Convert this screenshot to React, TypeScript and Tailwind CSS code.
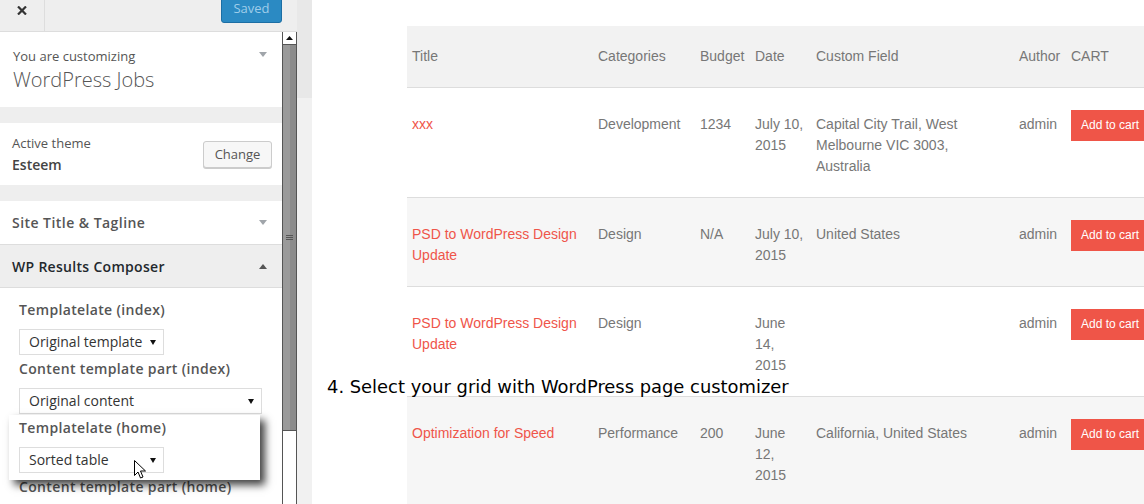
import React from "react";

function Tri({ up = false, className = "" }: { up?: boolean; className?: string }) {
  return (
    <svg width="8" height="5" viewBox="0 0 8 5" className={className}>
      <polygon points={up ? "0,5 8,5 4,0" : "0,0 8,0 4,5"} fill="currentColor" />
    </svg>
  );
}

function SelectBox({ label, width }: { label: string; width: string }) {
  return (
    <div className={`h-[26px] ${width} border border-[#ddd] bg-white flex items-center justify-between pl-[9px] pr-[7px]`}>
      <span className="text-[14px] leading-[20px] text-[#333]">{label}</span>
      <svg width="6" height="5" viewBox="0 0 6 5">
        <polygon points="0,0 6,0 3,5" fill="#111" />
      </svg>
    </div>
  );
}

function Label({ children }: { children: React.ReactNode }) {
  return <div className="text-[14px] leading-[20px] font-semibold tracking-[0.35px] text-[#555]">{children}</div>;
}

type Row = {
  title: string;
  cat: string;
  budget: string;
  date: string;
  field: string;
  shade: boolean;
};

const rows: Row[] = [
  { title: "xxx", cat: "Development", budget: "1234", date: "July 10, 2015", field: "Capital City Trail, West Melbourne VIC 3003, Australia", shade: false },
  { title: "PSD to WordPress Design Update", cat: "Design", budget: "N/A", date: "July 10, 2015", field: "United States", shade: true },
  { title: "PSD to WordPress Design Update", cat: "Design", budget: "", date: "June 14, 2015", field: "", shade: false },
  { title: "Optimization for Speed", cat: "Performance", budget: "200", date: "June 12, 2015", field: "California, United States", shade: true },
];

export default function App() {
  const td = "align-top pl-[5px] pr-[5px] pt-[26px] pb-[20px] font-normal text-left";
  const tdWide = "align-top pl-[5px] pr-[28px] pt-[26px] pb-[20px] font-normal text-left";
  const th = "align-top px-[5px] pt-[20px] pb-[20px] font-normal text-left";
  return (
    <div className="relative flex w-[1144px] h-[504px] overflow-hidden bg-white font-['Open_Sans',sans-serif]">
      {/* Sidebar */}
      <aside className="w-[297px] h-full flex flex-col bg-[#eee] shrink-0">
        <div className="h-[32px] shrink-0 flex border-b border-[#ddd] bg-[#eee]">
          <div className="w-[45px] border-r border-[#ddd] flex justify-center pt-[6px]">
            <svg width="10" height="9" viewBox="0 0 10 9">
              <path d="M1 0.5 L9 8.5 M9 0.5 L1 8.5" stroke="#333" strokeWidth="2.2" />
            </svg>
          </div>
          <div className="flex-1" />
          <div className="-mt-[6px] mr-[15px] h-[29px] w-[61px] rounded-[3px] border border-[#1c6ea4] bg-[#2b8ac3] flex items-center justify-center pt-[1px] text-[13px] text-[#9fcdea] shadow-[inset_0_1px_0_rgba(120,200,230,0.5)]">
            Saved
          </div>
        </div>
        <div className="flex flex-1 min-h-0">
          <div className="w-[282px] flex flex-col">
            <div className="h-[75px] bg-white flex justify-between pl-[13px] pr-[15px] pt-[15px]">
              <div>
                <div className="text-[13px] leading-[18px] text-[#555]">You are customizing</div>
                <div className="text-[20px] leading-[26px] font-light text-[#555] mt-[2px]">WordPress Jobs</div>
              </div>
              <Tri className="text-[#a0a5aa] mt-[5px]" />
            </div>
            <div className="h-[16px]" />
            <div className="h-[62px] bg-white flex justify-between pl-[12px] pr-[10px] pt-[11px]">
              <div>
                <div className="text-[13px] leading-[18px] text-[#555]">Active theme</div>
                <div className="text-[14px] leading-[20px] font-semibold text-[#444] mt-[3px]">Esteem</div>
              </div>
              <div className="mt-[7px] h-[27px] w-[69px] rounded-[3px] border border-[#ccc] bg-[#f7f7f7] flex items-center justify-center text-[13px] text-[#555] shadow-[0_1px_0_#ccc]">
                Change
              </div>
            </div>
            <div className="h-[16px]" />
            <div className="h-[44px] bg-white border-b border-[#ddd] flex items-center justify-between pl-[12px] pr-[15px]">
              <span className="text-[14px] font-semibold tracking-[0.45px] text-[#555]">Site Title &amp; Tagline</span>
              <Tri className="text-[#a0a5aa]" />
            </div>
            <div className="h-[43px] bg-[#eee] border-b border-[#ddd] flex items-center justify-between pl-[12px] pr-[15px]">
              <span className="text-[14px] font-semibold tracking-[0.3px] text-[#23282d]">WP Results Composer</span>
              <Tri up className="text-[#555]" />
            </div>
            <div className="flex-1 bg-white pl-[19px] pt-[12px] flex flex-col">
              <Label>Templatelate (index)</Label>
              <div className="mt-[9px]">
                <SelectBox label="Original template" width="w-[145px]" />
              </div>
              <div className="mt-[4px]">
                <Label>Content template part (index)</Label>
              </div>
              <div className="mt-[9px]">
                <SelectBox label="Original content" width="w-[243px]" />
              </div>
              <div className="mt-[4px]">
                <Label>Templatelate (home)</Label>
              </div>
              <div className="mt-[9px]">
                <SelectBox label="Sorted table" width="w-[145px]" />
              </div>
              <div className="mt-[4px]">
                <Label>Content template part (home)</Label>
              </div>
            </div>
          </div>
          {/* inner scrollbar */}
          <div className="w-[15px] border-x border-[#555] bg-white flex flex-col">
            <div className="h-[13px] border-b border-[#555] flex items-center justify-center">
              <svg width="7" height="4" viewBox="0 0 7 4">
                <polygon points="0,4 7,4 3.5,0" fill="#111" />
              </svg>
            </div>
            <div className="h-[386px] border-b border-[#555] bg-[linear-gradient(to_right,#9a9a9a_50%,#8c8c8c_50%)] flex items-center justify-center">
              <svg width="7" height="5" viewBox="0 0 7 5">
                <path d="M0 0.5H7M0 2.5H7M0 4.5H7" stroke="#555" strokeWidth="1" />
              </svg>
            </div>
          </div>
        </div>
      </aside>

      {/* divider strip */}
      <div className="w-[15px] h-full flex flex-col shrink-0">
        <div className="h-[98px] bg-[#e8e8e8]" />
        <div className="flex-1 bg-[#f1f1f1]" />
      </div>

      {/* Preview */}
      <main className="flex-1 h-full overflow-hidden bg-white pl-[95px] pt-[26px]">
        <table className="table-fixed border-collapse w-[759px] font-['Liberation_Sans',Arial,sans-serif] text-[14px] leading-[21px] text-[#777]">
          <colgroup>
            <col className="w-[186px]" />
            <col className="w-[102px]" />
            <col className="w-[55px]" />
            <col className="w-[61px]" />
            <col className="w-[203px]" />
            <col className="w-[52px]" />
            <col className="w-[100px]" />
          </colgroup>
          <thead>
            <tr className="bg-[#f2f2f2] border-b border-[#ddd]">
              <th className={th}>Title</th>
              <th className={th}>Categories</th>
              <th className={th}>Budget</th>
              <th className={th}>Date</th>
              <th className={th}>Custom Field</th>
              <th className={th}>Author</th>
              <th className={th}>CART</th>
            </tr>
          </thead>
          <tbody>
            {rows.map((r, i) => (
              <tr key={i} className={`border-b border-[#ddd] ${r.shade ? "bg-[#f6f6f6]" : "bg-white"}`}>
                <td className={`${td} text-[#ef554a]`}>{r.title}</td>
                <td className={td}>{r.cat}</td>
                <td className={td}>{r.budget}</td>
                <td className={td}>{r.date}</td>
                <td className={tdWide}>{r.field}</td>
                <td className={td}>admin</td>
                <td className={td}>
                  <div className="-mt-[5px] inline-flex h-[31px] items-center px-[10px] bg-[#ef5548] text-white text-[12px] whitespace-nowrap">
                    Add to cart
                  </div>
                </td>
              </tr>
            ))}
          </tbody>
        </table>
      </main>

      {/* magnified popup overlay */}
      <div className="absolute left-[9px] top-[415px] w-[251px] h-[65px] bg-white pl-[10px] pt-[3px] shadow-[5px_5px_8px_rgba(0,0,0,0.75)]">
        <Label>Templatelate (home)</Label>
        <div className="mt-[9px]">
          <SelectBox label="Sorted table" width="w-[145px]" />
        </div>
      </div>

      {/* mouse cursor */}
      <svg className="absolute left-[134px] top-[460px]" width="13" height="19" viewBox="0 0 13 19">
        <path d="M0.5 0.5 L0.5 15.5 L4 12 L6.5 18 L9 17 L6.5 11 L11.5 11 Z" fill="#fff" stroke="#000" strokeWidth="1" strokeLinejoin="round" />
      </svg>

      {/* caption */}
      <div className="absolute left-[327px] top-[376px] whitespace-nowrap text-[17.9px] leading-[22px] text-black font-['DejaVu_Sans',sans-serif]">
        4. Select your grid with WordPress page customizer
      </div>
    </div>
  );
}
